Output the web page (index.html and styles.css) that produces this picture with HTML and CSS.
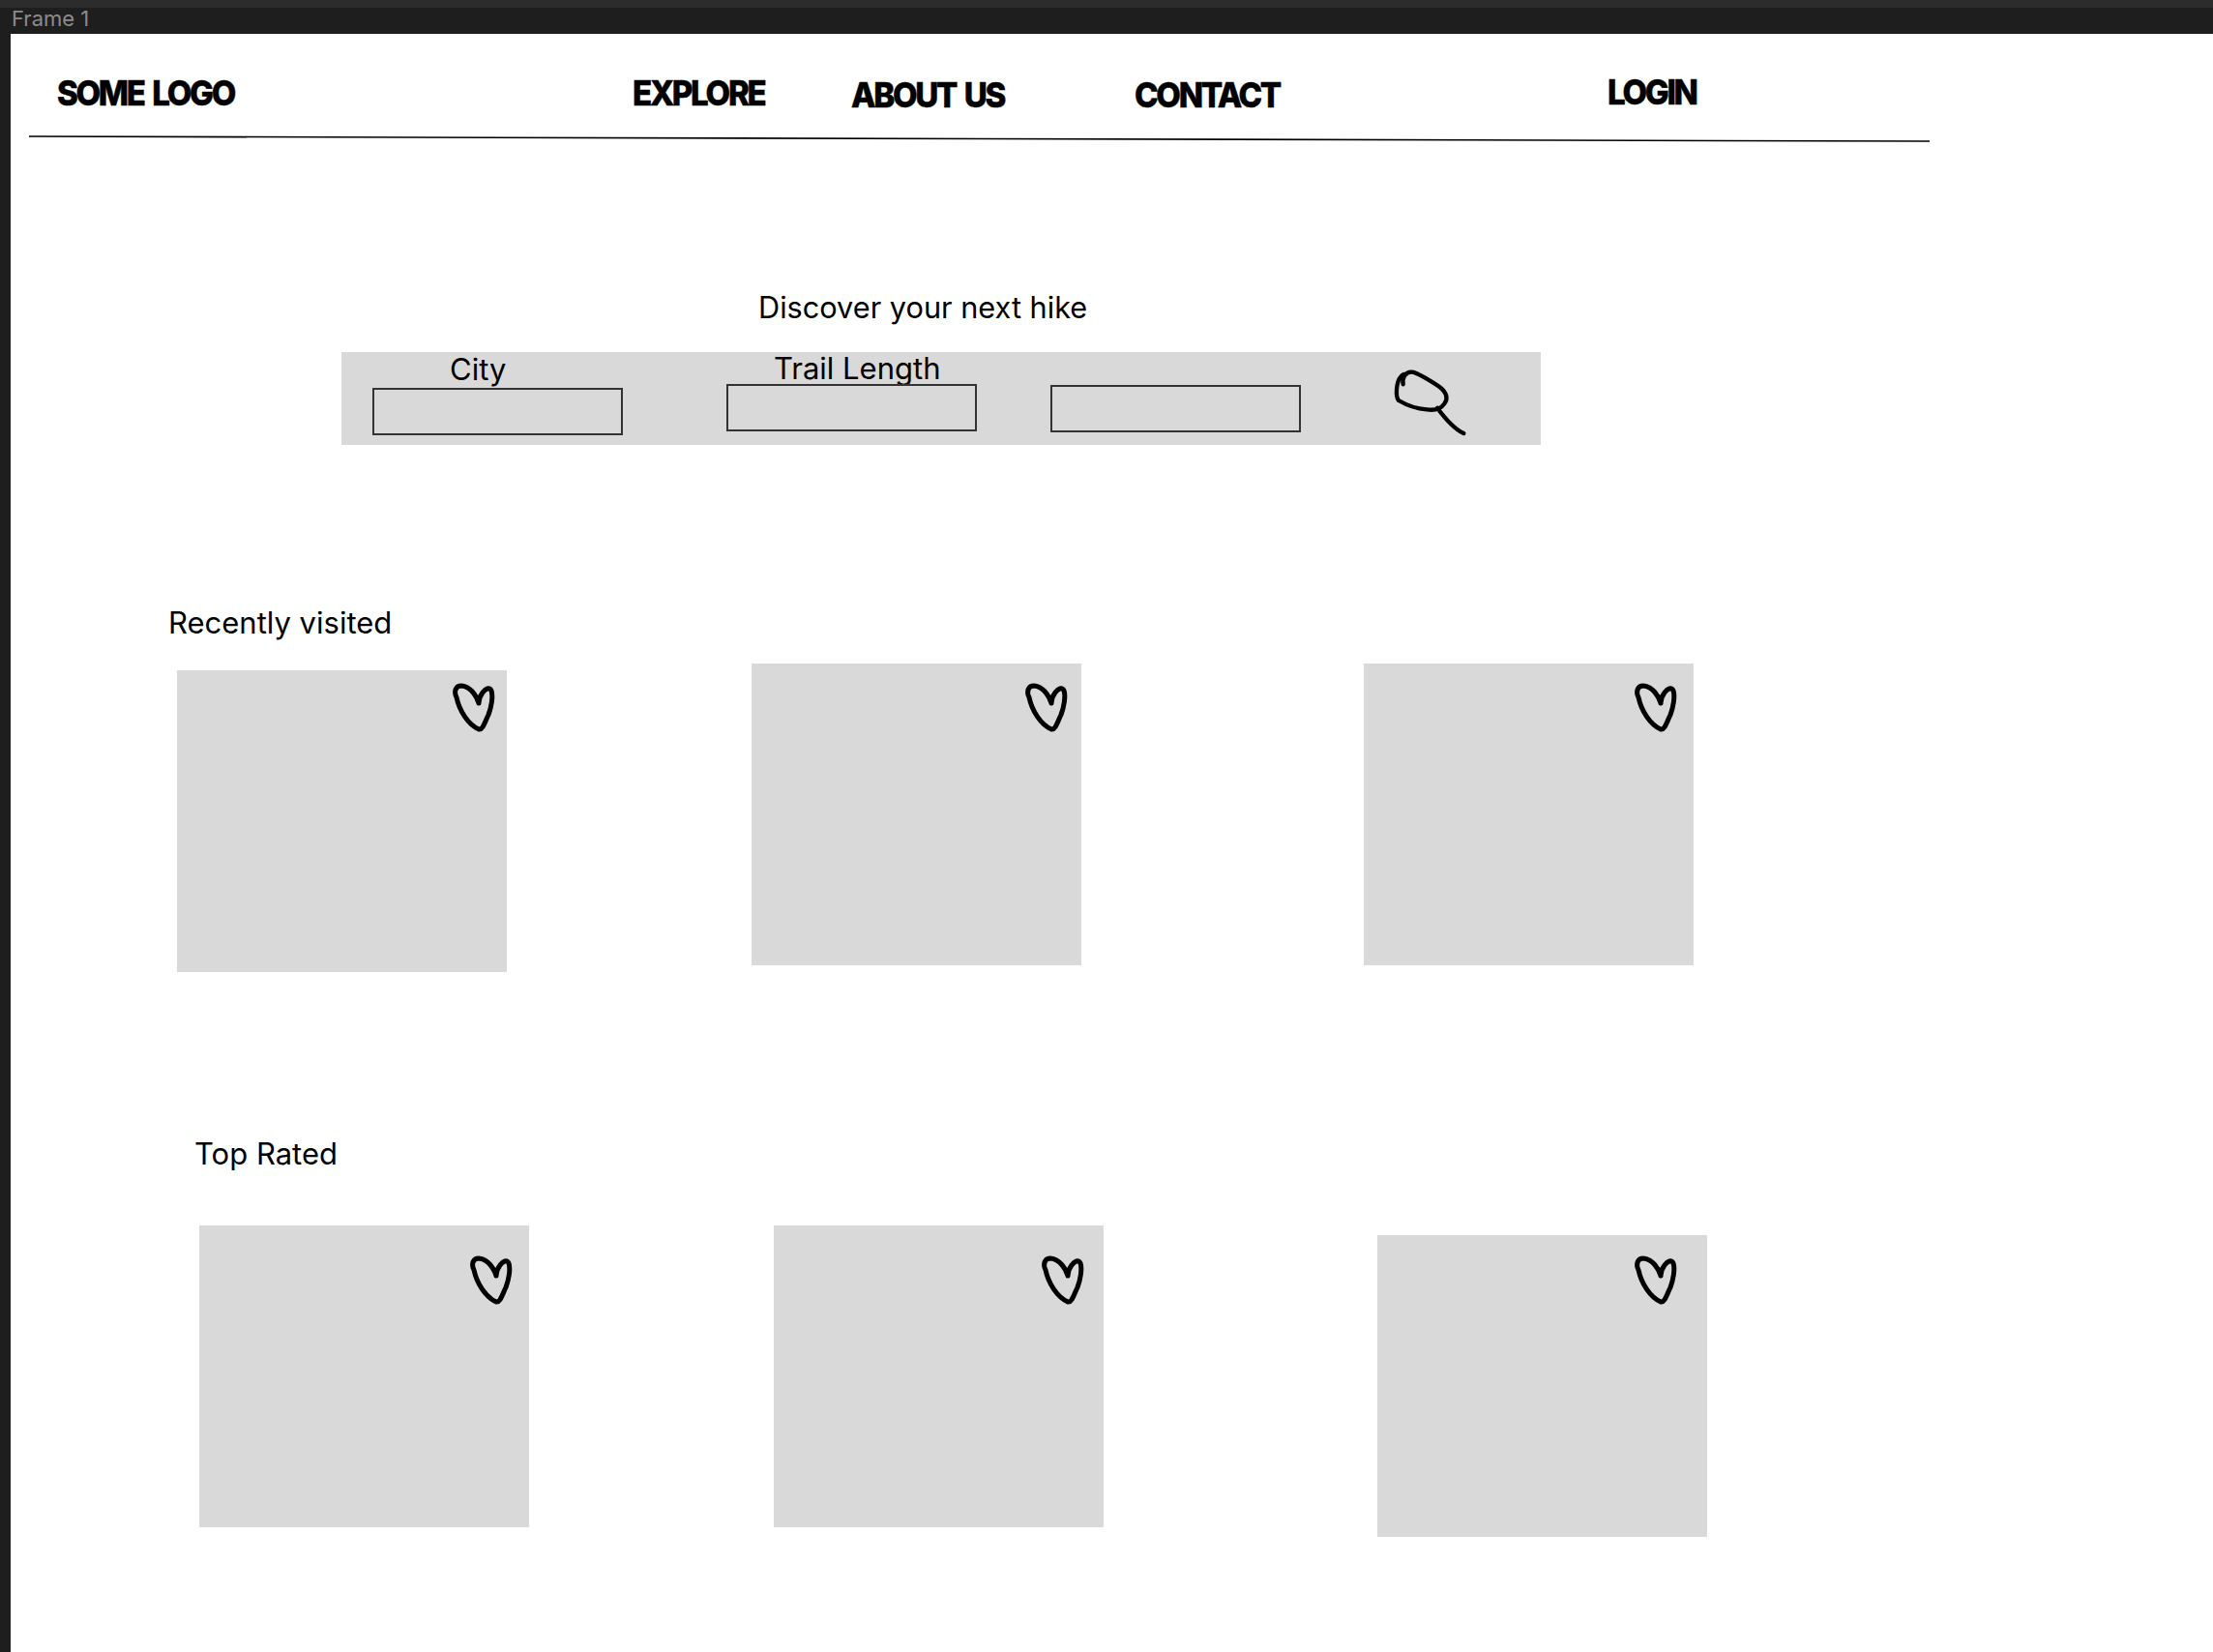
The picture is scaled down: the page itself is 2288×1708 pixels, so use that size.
FILE: index.html
```html
<!DOCTYPE html>
<html lang="en">
<head>
    <meta charset="UTF-8">
    <meta name="viewport" content="width=device-width, initial-scale=1.0">
    <title>Frame 1</title>
    <link rel="stylesheet" href="styles.css">
</head>
<body>
    <svg class="icon-defs" width="0" height="0">
        <symbol id="heart" viewBox="0 0 50 56">
            <path d="M29 22C27 15 21 5 11 4C5 4 3 10 6 16C9 30 18 44 29 49C33 50 35 42 39 34C42 26 44 15 42 9C40 5 36 7 33 11C30 15 29 18 29 22"/>
        </symbol>
    </svg>
    <div class="title-bar"><span class="frame-name">Frame 1</span></div>
    <div class="frame">
        <!-- wireframe: everything sits where it was dropped on the canvas -->
        <span class="nav-item logo">SOME LOGO</span>
        <a class="nav-item explore">EXPLORE</a>
        <a class="nav-item about">ABOUT US</a>
        <a class="nav-item contact">CONTACT</a>
        <a class="nav-item login">LOGIN</a>
        <svg class="nav-line" width="1990" height="10" viewBox="0 0 1990 10"><line x1="0" y1="2" x2="1965" y2="7"/></svg>

        <span class="label discover">Discover your next hike</span>
        <div class="search-bar"></div>
        <span class="label city-label">City</span>
        <span class="label trail-label">Trail Length</span>
        <div class="field field-city"></div>
        <div class="field field-trail"></div>
        <div class="field field-other"></div>
        <svg class="search-icon" width="120" height="110" viewBox="0 0 360 330">
            <path d="M122 112C118 95 128 72 150 74C170 78 205 100 235 120C258 138 262 158 250 172C238 190 215 193 195 190C165 188 130 175 108 162C98 150 100 105 115 88C120 82 126 80 132 80"/>
            <path d="M228 185C250 215 280 250 310 264"/>
        </svg>

        <span class="label recent-title">Recently visited</span>
        <div class="card card-r1"><svg class="heart heart-r1"><use href="#heart"/></svg></div>
        <div class="card card-r2"><svg class="heart heart-r2"><use href="#heart"/></svg></div>
        <div class="card card-r3"><svg class="heart heart-r3"><use href="#heart"/></svg></div>

        <span class="label top-title">Top Rated</span>
        <div class="card card-t1"><svg class="heart heart-t1"><use href="#heart"/></svg></div>
        <div class="card card-t2"><svg class="heart heart-t2"><use href="#heart"/></svg></div>
        <div class="card card-t3"><svg class="heart heart-t3"><use href="#heart"/></svg></div>
    </div>
</body>
</html>
```

FILE: styles.css
```css
html, body {
    height: 100%;
}
body {
    margin: 0;
    display: flex;
    flex-direction: column;
    background-color: #1e1e1e;
    font-family: Inter, "Liberation Sans", sans-serif;
    color: #000;
    overflow: hidden;
}
.icon-defs {
    position: absolute;
}
.title-bar {
    height: 35px;
    box-sizing: border-box;
    padding-left: 12px;
    border-top: 8px solid #2c2c2c;
    flex-shrink: 0;
}
.frame-name {
    display: block;
    font-size: 22px;
    line-height: 22px;
    color: #8c8c8c;
}
.frame {
    position: relative;
    flex: 1;
    margin-left: 11px;
    background-color: #fff;
}

/* nav */
.nav-item {
    position: absolute;
    font-size: 36px;
    line-height: 36px;
    font-weight: 800;
    letter-spacing: -2.5px;
    word-spacing: 4px;
    -webkit-text-stroke: 0.5px #000;
    white-space: nowrap;
    transform: scaleX(0.92);
    transform-origin: left;
}
.logo { left: 48px; top: 43px; }
.explore { left: 643px; top: 43px; }
.about { left: 869px; top: 45px; }
.contact { left: 1162px; top: 45px; }
.login { left: 1651px; top: 42px; }
.nav-line {
    position: absolute;
    left: 19px;
    top: 104px;
}
.nav-line line {
    stroke: #000;
    stroke-width: 1.6;
}

/* search */
.label {
    position: absolute;
    font-size: 31px;
    line-height: 31px;
    white-space: nowrap;
}
.discover { left: 773px; top: 267px; font-size: 30.7px; }
.city-label { left: 454px; top: 331px; }
.trail-label { left: 789px; top: 330px; }
.search-bar {
    position: absolute;
    left: 342px;
    top: 329px;
    width: 1240px;
    height: 96px;
    background-color: #d9d9d9;
}
.field {
    position: absolute;
    width: 259px;
    height: 49px;
    box-sizing: border-box;
    border: 2px solid #333;
}
.field-city { left: 374px; top: 366px; }
.field-trail { left: 740px; top: 362px; }
.field-other { left: 1075px; top: 363px; }
.search-icon {
    position: absolute;
    left: 1399px;
    top: 325px;
    fill: none;
    stroke: #000;
    stroke-width: 13;
    stroke-linecap: round;
    stroke-linejoin: round;
}

/* cards */
.recent-title { left: 163px; top: 593px; }
.top-title { left: 190px; top: 1142px; }
.card {
    position: absolute;
    width: 341px;
    height: 312px;
    background-color: #d9d9d9;
}
.card-r1 { left: 172px; top: 658px; }
.card-r2 { left: 766px; top: 651px; }
.card-r3 { left: 1399px; top: 651px; }
.card-t1 { left: 195px; top: 1232px; }
.card-t2 { left: 789px; top: 1232px; }
.card-t3 { left: 1413px; top: 1242px; }
.heart {
    position: absolute;
    width: 50px;
    height: 56px;
    fill: none;
    stroke: #000;
    stroke-width: 5;
    stroke-linecap: round;
    stroke-linejoin: round;
}
.heart-r1 { left: 283px; top: 12px; }
.heart-r2 { left: 281px; top: 19px; }
.heart-r3 { left: 278px; top: 19px; }
.heart-t1 { left: 278px; top: 30px; }
.heart-t2 { left: 275px; top: 30px; }
.heart-t3 { left: 264px; top: 20px; }
```
